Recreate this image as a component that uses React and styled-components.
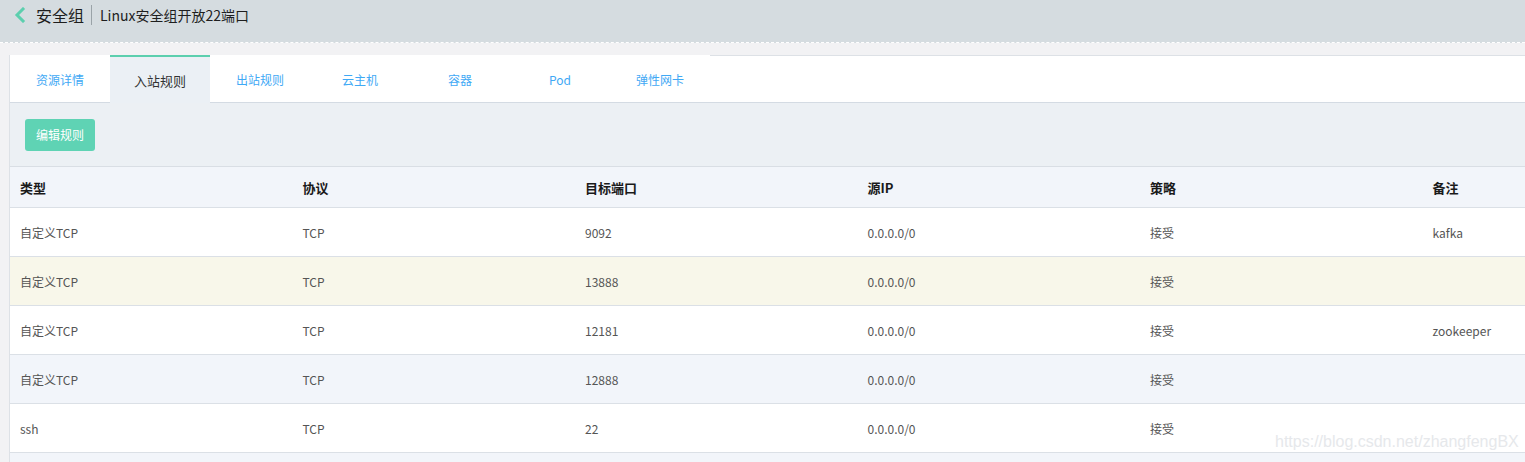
import React from 'react';
import styled, { createGlobalStyle } from 'styled-components';

const GlobalStyle = createGlobalStyle`
	body {
		margin: 0;
		background: #f2f2f4;
		font-family: "Microsoft YaHei", "Noto Sans CJK SC", "Liberation Sans", sans-serif;
		overflow: hidden;
	}
`

const tabs = ['资源详情', '入站规则', '出站规则', '云主机', '容器', 'Pod', '弹性网卡'];
const columns = ['类型', '协议', '目标端口', '源IP', '策略', '备注'];
const rows = [
	['自定义TCP', 'TCP', '9092', '0.0.0.0/0', '接受', 'kafka'],
	['自定义TCP', 'TCP', '13888', '0.0.0.0/0', '接受', ''],
	['自定义TCP', 'TCP', '12181', '0.0.0.0/0', '接受', 'zookeeper'],
	['自定义TCP', 'TCP', '12888', '0.0.0.0/0', '接受', ''],
	['ssh', 'TCP', '22', '0.0.0.0/0', '接受', ''],
];

export default function App() {
	return (
		<>
			<GlobalStyle />
			<Page>
				<Header>
					<Back>
						<svg width="12" height="16" viewBox="0 0 12 16">
							<path d="M9 2 L3 8 L9 14" fill="none" stroke="#5ccfae" strokeWidth="3" strokeLinecap="square" />
						</svg>
					</Back>
					<HeaderTitle>安全组</HeaderTitle>
					<Divider />
					<HeaderSub>Linux安全组开放22端口</HeaderSub>
				</Header>
				<Panel>
					<TabBar>
						{tabs.map((t, i) => (
							<Tab key={t} $active={i === 1}>{t}</Tab>
						))}
					</TabBar>
					<Toolbar>
						<EditButton>编辑规则</EditButton>
					</Toolbar>
					<Table>
						<HeadRow>
							{columns.map((c) => <HeadCell key={c}>{c}</HeadCell>)}
						</HeadRow>
						{rows.map((r, i) => (
							<Row key={i} $bg={i === 1 ? '#f8f7ea' : i === 3 ? '#f2f5fa' : '#fff'}>
								{r.map((c, j) => <Cell key={j}>{c}</Cell>)}
							</Row>
						))}
						<Row $bg="#f2f5fa" />
					</Table>
					<Watermark>https://blog.csdn.net/zhangfengBX</Watermark>
				</Panel>
			</Page>
		</>
	)
}

const Page = styled.div`
	width: 1525px;
	height: 462px;
	overflow: hidden;
`

const Header = styled.div`
	background: #d5dce0;
	border-bottom: 1px dashed #fff;
	display: flex;
	align-items: center;
	padding: 0 0 12px 14px;
	box-sizing: border-box;
	height: 43px;
`

const Back = styled.div`
	display: flex;
	align-items: center;
	margin-right: 10px;
`

const HeaderTitle = styled.span`
	font-size: 16px;
	color: #1e1e1e;
`

const Divider = styled.span`
	width: 1px;
	height: 20px;
	background: #9aa3a8;
	margin: 0 8px 0 7px;
`

const HeaderSub = styled.span`
	font-size: 14px;
	color: #1e1e1e;
`

const Panel = styled.div`
	position: relative;
	margin: 12px 0 0 9px;
	width: 1700px;
	border-left: 1px solid #dde1e6;
	border-top: 1px solid #dde1e6;
	background: #ecf0f4;
`

const TabBar = styled.div`
	display: flex;
	height: 46px;
	background: #fff;
	border-bottom: 1px solid #d4dbe3;
`

const Tab = styled.div`
	width: 100px;
	display: flex;
	align-items: center;
	justify-content: center;
	font-size: ${(p) => (p.$active ? '13px' : '12px')};
	color: ${(p) => (p.$active ? '#333' : '#3fa9f5')};
	background: ${(p) => (p.$active ? '#ebf0f5' : '#fff')};
	border-top: 2px solid ${(p) => (p.$active ? '#5ccfae' : 'transparent')};
	margin-top: -1px;
	margin-bottom: ${(p) => (p.$active ? '-1px' : '0')};
`

const Toolbar = styled.div`
	height: 63px;
	display: flex;
	align-items: center;
	padding-left: 15px;
	border-bottom: 1px solid #d9dee4;
	background: #ecf0f4;
`

const EditButton = styled.button`
	width: 70px;
	height: 32px;
	border: none;
	border-radius: 3px;
	background: #5fd3b4;
	color: #fff;
	font-size: 12px;
	font-family: inherit;
	cursor: pointer;
`

const Table = styled.div`
	display: flex;
	flex-direction: column;
`

const HeadRow = styled.div`
	display: grid;
	grid-template-columns: repeat(6, 282.5px);
	height: 40px;
	align-items: center;
	background: #f2f5fa;
	border-bottom: 1px solid #dbe0e6;
`

const HeadCell = styled.div`
	padding-left: 10px;
	font-size: 13px;
	font-weight: bold;
	color: #1a1a1a;
`

const Row = styled.div`
	display: grid;
	grid-template-columns: repeat(6, 282.5px);
	height: 48px;
	align-items: center;
	background: ${(p) => p.$bg};
	border-bottom: 1px solid #dbe0e6;
`

const Cell = styled.div`
	padding-left: 10px;
	font-size: 12px;
	color: #555;
`

const Watermark = styled.div`
	position: absolute;
	left: 1265px;
	top: 377px;
	font-family: "Liberation Sans", Arial, sans-serif;
	font-size: 16px;
	color: #e6e8eb;
`
